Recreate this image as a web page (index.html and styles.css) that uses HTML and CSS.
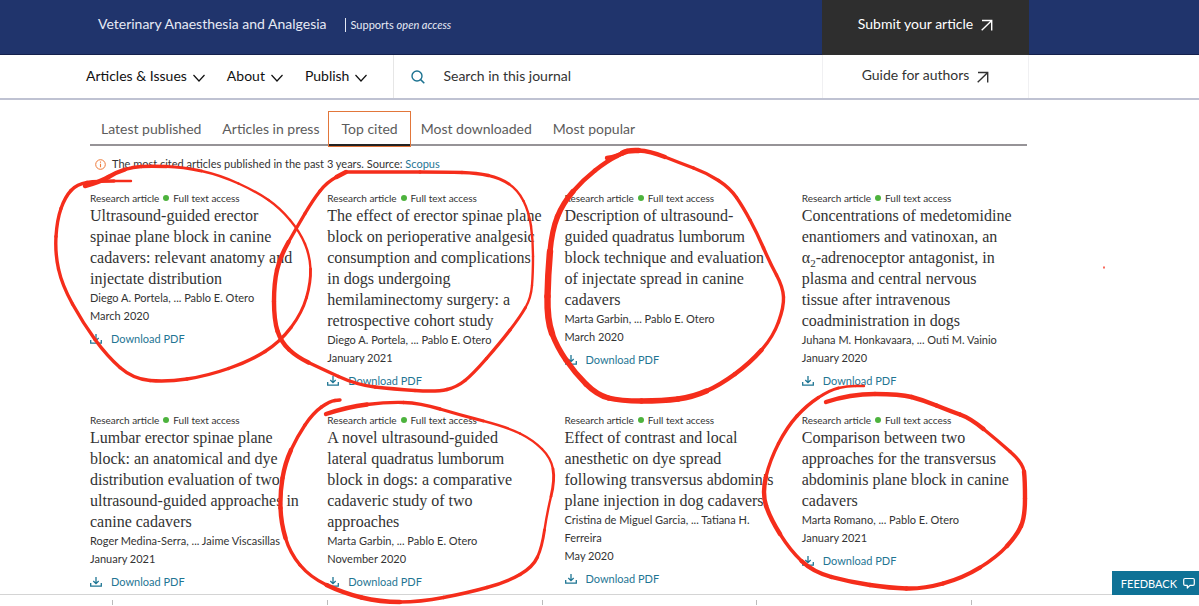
FILE: index.html
```html
<!DOCTYPE html>
<html lang="en">
<head>
<meta charset="utf-8">
<title>Veterinary Anaesthesia and Analgesia</title>
<link rel="stylesheet" href="styles.css">
</head>
<body>
<svg class="sprite" aria-hidden="true">
  <symbol id="chevron" viewBox="0 0 12 8"><path d="M.5 1 6 7 11.5 1" fill="none" stroke="currentColor" stroke-width="1.2"/></symbol>
  <symbol id="arrow" viewBox="0 0 12 12"><path d="M1 1.5H10.7V11.5M10.5 1.7.7 11.3" fill="none" stroke="currentColor" stroke-width="1.4"/></symbol>
  <symbol id="download" viewBox="0 0 12 10"><path d="M.7 6V9.2H11.3V6M6 0V6.5M3.3 4 6 6.6 8.7 4" fill="none" stroke="currentColor" stroke-width="1.3"/></symbol>
</svg>

<header class="banner">
  <a class="journal" href="#">Veterinary Anaesthesia and Analgesia</a>
  <p class="supports">Supports <em>open access</em></p>
  <a class="submit" href="#">Submit your article <svg class="arrow"><use href="#arrow"/></svg></a>
</header>

<nav class="menubar">
  <div class="menus">
    <button type="button">Articles &amp; Issues <svg class="chevron"><use href="#chevron"/></svg></button>
    <button type="button">About <svg class="chevron"><use href="#chevron"/></svg></button>
    <button type="button">Publish <svg class="chevron"><use href="#chevron"/></svg></button>
  </div>
  <label class="search">
    <svg class="lens" viewBox="0 0 14 14"><circle cx="6" cy="6" r="5" fill="none" stroke="currentColor" stroke-width="1.4"/><path d="M9.6 9.6 13.3 13.3" stroke="currentColor" stroke-width="1.5"/></svg>
    <input type="search" placeholder="Search in this journal" aria-label="Search in this journal">
  </label>
  <a class="guide" href="#">Guide for authors <svg class="arrow"><use href="#arrow"/></svg></a>
</nav>

<main class="content">
  <div class="tabs" role="tablist">
    <button type="button" role="tab">Latest published</button>
    <button type="button" role="tab">Articles in press</button>
    <button type="button" role="tab" class="active" aria-selected="true">Top cited</button>
    <button type="button" role="tab">Most downloaded</button>
    <button type="button" role="tab">Most popular</button>
  </div>
  <p class="note">
    <svg class="info" viewBox="0 0 11 11"><circle cx="5.5" cy="5.5" r="4.8" fill="none" stroke="currentColor"/><path d="M5.5 4.7V8.2M5.5 2.6V3.8" stroke="currentColor" stroke-width="1.1"/></svg>
    <span>The most cited articles published in the past 3 years. Source: <a href="#">Scopus</a></span>
  </p>
  <div class="articles">
    <article>
      <p class="meta">Research article <i class="dot"></i> Full text access</p>
      <h3>Ultrasound-guided erector<br>spinae plane block in canine<br>cadavers: relevant anatomy and<br>injectate distribution</h3>
      <p class="by">Diego A. Portela, ... Pablo E. Otero</p>
      <p class="by">March 2020</p>
      <a class="pdf" href="#"><svg><use href="#download"/></svg>Download PDF</a>
    </article>
    <article>
      <p class="meta">Research article <i class="dot"></i> Full text access</p>
      <h3>The effect of erector spinae plane<br>block on perioperative analgesic<br>consumption and complications<br>in dogs undergoing<br>hemilaminectomy surgery: a<br>retrospective cohort study</h3>
      <p class="by">Diego A. Portela, ... Pablo E. Otero</p>
      <p class="by">January 2021</p>
      <a class="pdf" href="#"><svg><use href="#download"/></svg>Download PDF</a>
    </article>
    <article>
      <p class="meta">Research article <i class="dot"></i> Full text access</p>
      <h3>Description of ultrasound-<br>guided quadratus lumborum<br>block technique and evaluation<br>of injectate spread in canine<br>cadavers</h3>
      <p class="by">Marta Garbin, ... Pablo E. Otero</p>
      <p class="by">March 2020</p>
      <a class="pdf" href="#"><svg><use href="#download"/></svg>Download PDF</a>
    </article>
    <article>
      <p class="meta">Research article <i class="dot"></i> Full text access</p>
      <h3>Concentrations of medetomidine<br>enantiomers and vatinoxan, an<br>α<sub>2</sub>-adrenoceptor antagonist, in<br>plasma and central nervous<br>tissue after intravenous<br>coadministration in dogs</h3>
      <p class="by">Juhana M. Honkavaara, ... Outi M. Vainio</p>
      <p class="by">January 2020</p>
      <a class="pdf" href="#"><svg><use href="#download"/></svg>Download PDF</a>
    </article>
    <article>
      <p class="meta">Research article <i class="dot"></i> Full text access</p>
      <h3>Lumbar erector spinae plane<br>block: an anatomical and dye<br>distribution evaluation of two<br>ultrasound-guided approaches in<br>canine cadavers</h3>
      <p class="by">Roger Medina-Serra, ... Jaime Viscasillas</p>
      <p class="by">January 2021</p>
      <a class="pdf" href="#"><svg><use href="#download"/></svg>Download PDF</a>
    </article>
    <article>
      <p class="meta">Research article <i class="dot"></i> Full text access</p>
      <h3>A novel ultrasound-guided<br>lateral quadratus lumborum<br>block in dogs: a comparative<br>cadaveric study of two<br>approaches</h3>
      <p class="by">Marta Garbin, ... Pablo E. Otero</p>
      <p class="by">November 2020</p>
      <a class="pdf" href="#"><svg><use href="#download"/></svg>Download PDF</a>
    </article>
    <article>
      <p class="meta">Research article <i class="dot"></i> Full text access</p>
      <h3>Effect of contrast and local<br>anesthetic on dye spread<br>following transversus abdominis<br>plane injection in dog cadavers</h3>
      <p class="by">Cristina de Miguel Garcia, ... Tatiana H.<br>Ferreira</p>
      <p class="by">May 2020</p>
      <a class="pdf" href="#"><svg><use href="#download"/></svg>Download PDF</a>
    </article>
    <article>
      <p class="meta">Research article <i class="dot"></i> Full text access</p>
      <h3>Comparison between two<br>approaches for the transversus<br>abdominis plane block in canine<br>cadavers</h3>
      <p class="by">Marta Romano, ... Pablo E. Otero</p>
      <p class="by">January 2021</p>
      <a class="pdf" href="#"><svg><use href="#download"/></svg>Download PDF</a>
    </article>
  </div>
</main>

<footer class="ruler"><div class="ticks"><span></span><span></span><span></span><span></span><span></span></div></footer>

<button type="button" class="feedback">FEEDBACK
  <svg viewBox="0 0 12 12"><path d="M2 1.5H10Q11.3 1.5 11.3 2.8V7Q11.3 8.3 10 8.3H7L4.3 11V8.3H2Q.7 8.3.7 7V2.8Q.7 1.5 2 1.5Z" fill="none" stroke="currentColor" stroke-width="1.2" stroke-linejoin="round"/></svg>
</button>

<svg class="ink" id="ink" aria-hidden="true"></svg>
<script src="ink.js"></script>
</body>
</html>
```

FILE: styles.css
```css
* { box-sizing: border-box; }

body {
  margin: 0;
  min-height: 100vh;
  position: relative;
  overflow: hidden;
  background: #fff;
  color: #333;
  font-family: Lato, "Open Sans", sans-serif;
}

p, h3 { margin: 0; }
a { color: inherit; text-decoration: none; }
button { border: 0; padding: 0; background: none; color: inherit; font: inherit; cursor: pointer; }
.sprite { display: none; }

.banner {
  display: flex;
  height: 55px;
  padding: 0 170px 0 98px;
  background: #20346c;
  border-bottom: 1px solid #14204c;
  color: #e6eaf5;
}
.journal { margin-top: 14px; font-size: 14px; line-height: 20px; white-space: nowrap; }
.supports {
  margin: 18px 0 0 18px;
  height: 14px;
  padding-left: 5px;
  border-left: 1px solid #e4e8f4;
  font-size: 11px;
  line-height: 14px;
  white-space: nowrap;
}
.submit, .guide {
  width: 207px;
  margin-left: auto;
  display: flex;
  justify-content: center;
  gap: 8px;
  font-size: 14px;
  white-space: nowrap;
}
.submit { height: 55px; padding-top: 14px; line-height: 20px; background: #2e2e2e; color: #fff; }
.arrow { width: 12px; height: 12px; margin-top: 5px; }

.menubar {
  display: flex;
  height: 45px;
  padding: 0 170px 0 86px;
  border-bottom: 2px solid #bfc2d2;
  font-size: 14px;
}
.menus { display: flex; gap: 22px; padding: 0 26px 2px 0; color: #111; border-right: 1px solid #e6e6e6; }
.menus button { display: flex; align-items: center; gap: 6px; white-space: nowrap; }
.chevron { width: 12px; height: 8px; margin-top: 5px; }
.search { flex: 1; display: flex; align-items: center; gap: 18px; padding: 0 0 2px 17px; }
.lens { width: 14px; height: 14px; margin-top: 2px; color: #1d7391; }
.search input { flex: 1; min-width: 0; border: 0; padding: 0; outline: 0; font: inherit; color: #333; background: none; }
.search input::placeholder { color: #333; opacity: 1; }
.guide { padding-top: 10px; line-height: 20px; border: solid #f0f0f2; border-width: 0 1px; }
.guide .arrow { margin-top: 6px; }

.content { padding: 12px 172px 0 90px; }
.tabs { display: flex; border-bottom: 2px solid #969397; font-size: 14px; color: #5c5c5c; }
.tabs button { height: 32px; padding: 0 10px 0 11px; white-space: nowrap; }
.tabs .active {
  height: 34px;
  margin-bottom: -2px;
  padding: 0 12px;
  outline: 1px solid #e2763a;
  border-bottom: 2px solid #222;
}
.note { display: flex; gap: 6px; margin-top: 9px; padding-left: 5px; font-size: 11px; line-height: 18px; }
.info { width: 11px; height: 11px; margin-top: 4px; color: #ee7a3a; }
.note a, .pdf { color: #1f7694; }

.articles {
  display: grid;
  grid-template-columns: repeat(4, 1fr);
  column-gap: 12px;
  row-gap: 23px;
  margin-top: 18px;
}
article { min-width: 0; white-space: nowrap; }
.meta { display: flex; align-items: center; gap: 4px; font-size: 10px; line-height: 14px; }
.dot { width: 6px; height: 6px; border-radius: 50%; background: #4db33d; }
h3 { font: 400 16px/21px "Liberation Serif", serif; color: #333; }
sub { font-size: 11px; line-height: 0; }
.by { font-size: 11px; line-height: 18px; }
.pdf { display: flex; align-items: center; gap: 9px; margin-top: 5px; font-size: 11px; line-height: 18px; }
.pdf svg { width: 12px; height: 10px; }

.ruler { margin-top: 3px; padding: 5px 13px 0 112px; border-top: 1px solid #d4d4d4; }
.ticks { display: grid; grid-template-columns: repeat(5, 1fr); }
.ticks span { height: 5px; border-left: 1px solid #bbb; }

.feedback {
  position: fixed;
  right: 0;
  bottom: 11px;
  display: flex;
  align-items: center;
  gap: 6px;
  height: 24px;
  padding: 0 4px 0 9px;
  background: #0f7296;
  color: #fff;
  font-size: 11px;
}
.feedback svg { width: 12px; height: 12px; }

.ink { position: absolute; top: 0; left: 0; width: 100%; height: 100%; pointer-events: none; }
```

FILE: ink.js
```javascript
// Freehand pen strokes: each point is [x, y, pen width].
const strokes = [
  [[85,186,4],[100,182,4],[117,172,4],[133,167,3],[150,166,3],[183,167,2.5],[220,175,2],[257,192,2],[280,208,2],[300,232,2],[310,256,2],[311,282,2.5],[302,313,2.5],[280,342,3],[250,361,3],[207,376,3],[167,382,3],[133,379,3],[107,356,3],[83,323,3],[62,285,3],[55,253,3],[57,220,3],[65,197,3],[77,184,3],[97,181,3],[131,181,2]],
  [[346,172,4],[393,172,3],[447,172,3],[477,173,3],[500,178,2.5],[518,190,2],[529,212,2],[533,240,2],[533,273,2],[531,298,2],[520,317,2.5],[500,343,3],[473,374,3],[457,387,3],[437,392,3],[393,389,3],[357,385,3],[320,368,3],[297,357,4],[281,342,4],[274,320,4],[274,283,4],[280,257,4],[297,227,3],[313,200,3],[327,182,3],[346,172,4]],
  [[607,158,4],[618,156,4],[627,150,5],[650,151,4],[680,163,3],[707,173,3],[730,188,3],[743,207,3],[757,233,3],[770,263,3],[783,287,3],[784,307,3],[773,337,3],[750,363,4],[720,385,4],[693,397,5],[663,401,5],[620,401,5],[597,395,5],[575,373,5],[557,347,5],[547,320,6],[548,273,6],[552,230,5],[563,203,5],[583,180,4],[607,161,4],[627,151,4]],
  [[326,414,4],[347,407,4],[387,402,3],[420,403,3],[460,415,2.5],[507,427,2],[533,440,2],[551,458,2],[555,480,2.5],[547,513,2],[542,547,2.5],[533,567,3],[507,582,3],[467,593,3],[420,602,3],[380,602,4],[343,593,4],[310,577,3],[290,553,3],[281,523,4],[280,493,4],[285,463,4],[297,437,3],[313,413,3],[330,401,3],[340,400,3]],
  [[826,402,4],[850,394,4],[900,394,4],[923,400,4],[950,411,4],[970,418,4],[997,440,3],[1023,463,3],[1025,480,4],[1025,517,4],[1017,535,4],[997,557,3],[963,578,4],[923,589,4],[890,588,4],[850,582,4],[813,572,4],[790,550,3],[770,518,4],[762,493,4],[770,460,3],[787,427,3],[807,405,3],[830,390,2.5],[847,386,2],[864,386,2]],
  [[1104,267,1],[1104,268,1]]
];

const svg = document.getElementById("ink");
const mid = (a, b) => [(a[0] + b[0]) / 2, (a[1] + b[1]) / 2];

for (const points of strokes) {
  let from = points[0];
  for (let i = 1; i < points.length; i++) {
    const p = points[i];
    const to = i === points.length - 1 ? p : mid(p, points[i + 1]);
    const path = document.createElementNS("http://www.w3.org/2000/svg", "path");
    path.setAttribute("d", `M${from[0]} ${from[1]}Q${p[0]} ${p[1]} ${to[0]} ${to[1]}`);
    path.setAttribute("fill", "none");
    path.setAttribute("stroke", "#f52d1b");
    path.setAttribute("stroke-linecap", "round");
    path.setAttribute("stroke-width", p[2] + 0.4);
    svg.append(path);
    from = to;
  }
}
```
